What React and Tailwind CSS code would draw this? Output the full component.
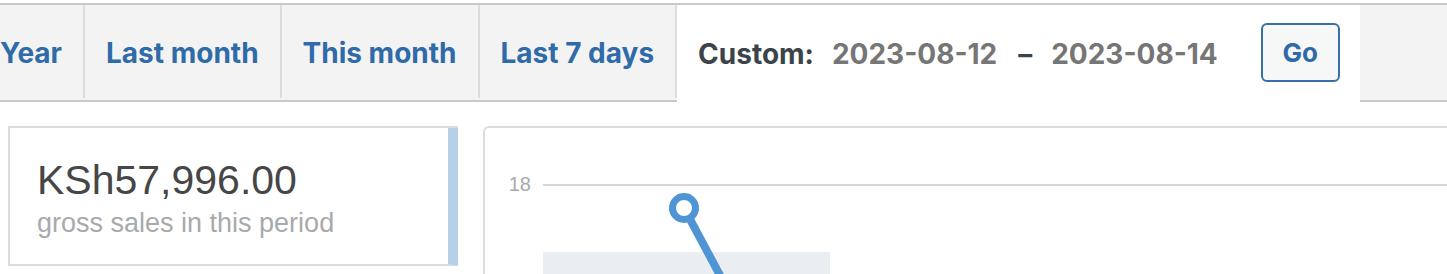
import React from 'react';

const tabs = ['Year', 'Last month', 'This month', 'Last 7 days'];

const RangeTabs = () => (
  <div className="mt-[3px] h-[99px] border-t-2 border-b-2 border-[#c8c9cc] bg-[#f3f3f3] flex items-start">
    <div className="flex items-start -ml-[21px]">
      {tabs.map((t) => (
        <div
          key={t}
          className="h-[93px] flex items-center px-[21px] pt-[3px] border-r-2 border-[#dcdcde] text-[28px] font-bold text-[#2f6ba8] whitespace-nowrap"
        >
          {t}
        </div>
      ))}
    </div>
    <div className="self-stretch -mb-[2px] bg-white flex items-center pl-[21px] pr-[20px] text-[28px] font-bold whitespace-nowrap">
      <span className="text-[#3c434a]">Custom:</span>
      <span className="ml-[18px] text-[#767676]">2023-08-12</span>
      <span className="ml-[21px] text-[#3c434a]">–</span>
      <span className="ml-[19px] text-[#767676]">2023-08-14</span>
      <button className="ml-[43px] mb-[2px] w-[79px] h-[59px] rounded-[6px] border-2 border-[#3a6ea8] bg-[#f6f7f7] text-[#2f6ba8] text-[26px] font-bold">
        Go
      </button>
    </div>
  </div>
);

const Legend = () => (
  <div className="ml-[8px] w-[450px] shrink-0 border-t-2 border-l-2 border-[#dcdcde]">
    <div className="h-[138px] border-r-[10px] border-[#b6d1e7] border-b-2 border-b-[#dcdcde] pl-[27px] pt-[29px]">
      <div className="text-[41px] leading-[46px] text-[#464646]">KSh57,996.00</div>
      <div className="text-[27px] leading-[40px] text-[#a7aaad]">gross sales in this period</div>
    </div>
  </div>
);

const Chart = () => (
  <div className="ml-[25px] flex-1 border-t-2 border-l-2 border-[#dcdcde] rounded-tl-[6px] overflow-hidden">
    <svg width="963" height="146" className="block">
      <text x="46" y="63" textAnchor="end" fontSize="20" fill="#a7aaad" fontFamily="'Liberation Sans', Arial, sans-serif">
        18
      </text>
      <line x1="58" y1="57" x2="963" y2="57" stroke="#d5d7da" strokeWidth="2" />
      <rect x="58" y="124" width="287" height="30" fill="#ebeef0" />
      <line x1="199" y1="80" x2="245" y2="166" stroke="#4f95d6" strokeWidth="8" />
      <circle cx="199" cy="80" r="11.5" fill="#fff" stroke="#4f95d6" strokeWidth="7" />
    </svg>
  </div>
);

export default function App() {
  return (
    <div className="w-[1447px] h-[274px] overflow-hidden bg-white" style={{ fontFamily: 'Inter, Roboto, "Liberation Sans", Arial, sans-serif' }}>
      <RangeTabs />
      <div className="mt-[24px] flex items-start" style={{ fontFamily: '"Liberation Sans", Arial, sans-serif' }}>
        <Legend />
        <Chart />
      </div>
    </div>
  );
}
